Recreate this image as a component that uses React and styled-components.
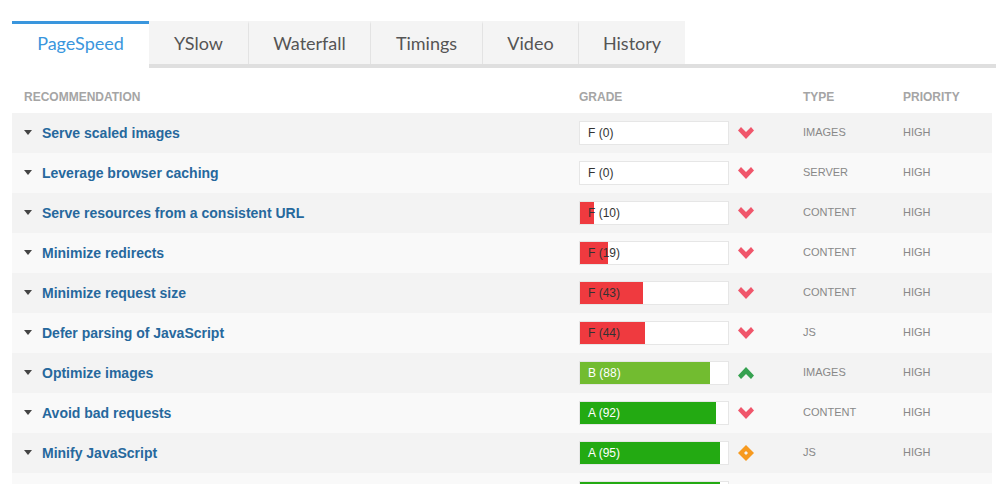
import styled, { createGlobalStyle } from "styled-components";

const GlobalStyle = createGlobalStyle`
    html, body {
        margin: 0;
        height: 484px;
        overflow: hidden;
        background: #fff;
        font-family: "Liberation Sans", Arial, sans-serif;
    }
`

const Page = styled.div`
    width: 996px;
    height: 484px;
    overflow: hidden;
    padding: 21px 4px 0 12px;
    box-sizing: border-box;
`

const Tabs = styled.div`
    display: flex;
    margin-right: -4px;
    height: 43px;
    border-bottom: 4px solid #dfdfdf;
`

const Tab = styled.div`
    width: ${p => p.$width}px;
    box-sizing: border-box;
    height: ${p => p.$active ? 47 : 43}px;
    background: ${p => p.$active ? '#fff' : '#f4f4f4'};
    border-top: 3px solid ${p => p.$active ? '#3a96dd' : '#f4f4f4'};
    border-left: ${p => p.$divider ? '1px solid #e3e3e3' : '0'};
    padding-bottom: ${p => p.$active ? 6 : 2}px;
    color: ${p => p.$active ? '#3a96dd' : '#555'};
    font-family: Lato, "Noto Sans", sans-serif;
    font-size: 18px;
    display: flex;
    align-items: center;
    justify-content: center;
`

const HeadRow = styled.div`
    display: grid;
    grid-template-columns: 555px 224px 100px 1fr;
    height: 45px;
    padding: 13px 0 0 12px;
    align-items: center;
    font-size: 12px;
    font-weight: bold;
    color: #a5a5a5;
    box-sizing: border-box;
`

const Row = styled.div`
    display: grid;
    grid-template-columns: 555px 224px 100px 1fr;
    height: 40px;
    padding-left: 12px;
    align-items: center;
    background: ${p => p.$odd ? '#f3f3f3' : '#f9f9f9'};
`

const Name = styled.div`
    display: flex;
    align-items: center;
    gap: 10px;
    font-size: 14px;
    font-weight: bold;
    color: #26689d;
    margin-top: -1px;
`

const Caret = styled.span`
    width: 0;
    height: 0;
    border-left: 4.5px solid transparent;
    border-right: 4.5px solid transparent;
    border-top: 5px solid #444;
`

const Grade = styled.div`
    display: flex;
    align-items: center;
    gap: 9px;
`

const GradeBox = styled.div`
    position: relative;
    width: 150px;
    height: 24px;
    box-sizing: border-box;
    border: 1px solid #e6e6e6;
    background: #fff;
`

const GradeFill = styled.div`
    height: 100%;
    background: ${p => p.$color};
`

const GradeLabel = styled.span`
    position: absolute;
    left: 8px;
    top: 4px;
    font-size: 12px;
    line-height: 14px;
    color: ${p => p.$light ? '#fff' : '#333'};
`

const Cell = styled.div`
    font-size: 11px;
    color: #888;
    margin-top: -2px;
`

function Trend({ kind }) {
    if (kind === 'up') {
        return <svg width="16" height="16" viewBox="0 0 16 16"><path d="M8 2 L16 10.5 L13 14 L8 9 L3 14 L0 10.5 Z" fill="#36a150" /></svg>
    }
    if (kind === 'same') {
        return <svg width="16" height="16" viewBox="0 0 16 16"><path fillRule="evenodd" d="M8 0 L16 8 L8 16 L0 8 Z M8 6 L6 8 L8 10 L10 8 Z" fill="#f79a1f" /></svg>
    }
    return <svg width="16" height="16" viewBox="0 0 16 16"><path d="M8 14 L16 5.5 L13 2 L8 7 L3 2 L0 5.5 Z" fill="#f0566b" /></svg>
}

const rows = [
    ['Serve scaled images', 'F', 0, 'down', 'IMAGES'],
    ['Leverage browser caching', 'F', 0, 'down', 'SERVER'],
    ['Serve resources from a consistent URL', 'F', 10, 'down', 'CONTENT'],
    ['Minimize redirects', 'F', 19, 'down', 'CONTENT'],
    ['Minimize request size', 'F', 43, 'down', 'CONTENT'],
    ['Defer parsing of JavaScript', 'F', 44, 'down', 'JS'],
    ['Optimize images', 'B', 88, 'up', 'IMAGES'],
    ['Avoid bad requests', 'A', 92, 'down', 'CONTENT'],
    ['Minify JavaScript', 'A', 95, 'same', 'JS'],
    ['Minify CSS', 'A', 95, 'same', 'CONTENT'],
]

const gradeColors = { A: '#23aa12', B: '#72bc30', F: '#ef3a3f' }

export default function App() {
    return (
        <Page>
            <GlobalStyle />
            <Tabs>
                <Tab $active $width={137}>PageSpeed</Tab>
                <Tab $width={99}>YSlow</Tab>
                <Tab $divider $width={122}>Waterfall</Tab>
                <Tab $divider $width={112}>Timings</Tab>
                <Tab $divider $width={96}>Video</Tab>
                <Tab $divider $width={107}>History</Tab>
            </Tabs>
            <HeadRow>
                <div>RECOMMENDATION</div>
                <div>GRADE</div>
                <div>TYPE</div>
                <div>PRIORITY</div>
            </HeadRow>
            {rows.map(([name, letter, score, trend, type], i) => (
                <Row key={name} $odd={i % 2 === 0}>
                    <Name><Caret />{name}</Name>
                    <Grade>
                        <GradeBox>
                            <GradeFill $color={gradeColors[letter]} style={{ width: Math.floor(score * 1.48) }} />
                            <GradeLabel $light={letter !== 'F'}>{letter} ({score})</GradeLabel>
                        </GradeBox>
                        <Trend kind={trend} />
                    </Grade>
                    <Cell>{type}</Cell>
                    <Cell>HIGH</Cell>
                </Row>
            ))}
        </Page>
    )
}
